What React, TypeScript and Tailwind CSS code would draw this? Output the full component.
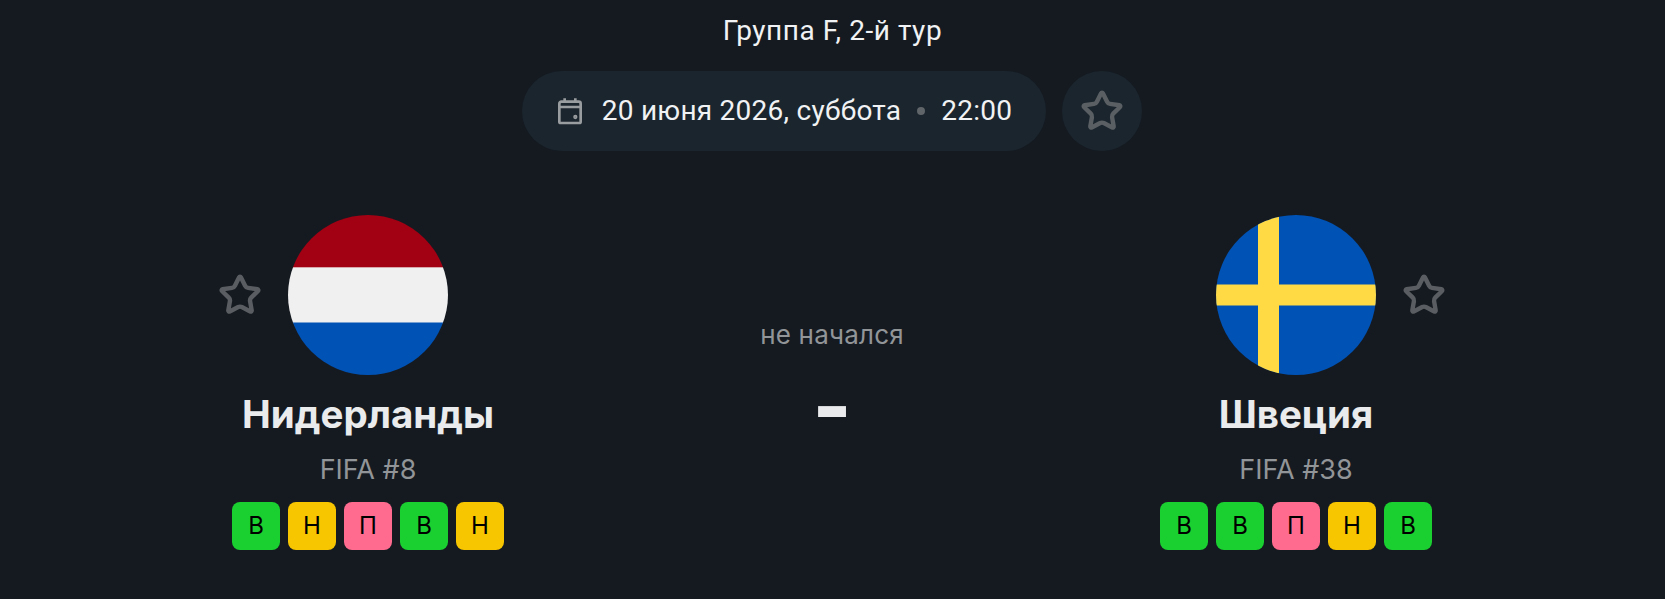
import { Star } from "lucide-react";

type Res = "В" | "Н" | "П";

const resColor: Record<Res, string> = {
  В: "bg-[#1ad030]",
  Н: "bg-[#f7c600]",
  П: "bg-[#ff6b8f]",
};

function Netherlands() {
  return (
    <svg width="160" height="160" viewBox="0 0 160 160" className="rounded-full">
      <rect width="160" height="53" fill="#a20013" />
      <rect y="52.3" width="160" height="56" fill="#f0f0f0" />
      <rect y="107.5" width="160" height="52.5" fill="#0052b4" />
    </svg>
  );
}

function Sweden() {
  return (
    <svg width="160" height="160" viewBox="0 0 160 160" className="rounded-full">
      <rect width="160" height="160" fill="#0052b4" />
      <rect x="42" width="21" height="160" fill="#ffda44" />
      <rect y="69.5" width="160" height="21" fill="#ffda44" />
    </svg>
  );
}

function Badges({ items }: { items: Res[] }) {
  return (
    <div className="mt-4 flex gap-2">
      {items.map((r, i) => (
        <div
          key={i}
          className={`flex h-12 w-12 items-center justify-center rounded-lg text-[24px] text-black ${resColor[r]}`}
        >
          {r}
        </div>
      ))}
    </div>
  );
}

function Team({
  name,
  rank,
  form,
  flag,
  side,
}: {
  name: string;
  rank: string;
  form: Res[];
  flag: React.ReactNode;
  side: "left" | "right";
}) {
  const star = <Star size={44} strokeWidth={2.4} className="text-[#5a5e62]" />;
  return (
    <div className="flex w-[400px] flex-col items-center">
      <div className="grid w-full grid-cols-[1fr_160px_1fr] items-center">
        <div className="flex justify-end pr-[26px]">{side === "left" && star}</div>
        {flag}
        <div className="flex justify-start pl-[26px]">{side === "right" && star}</div>
      </div>
      <div className="mt-[15px] text-[38.5px] leading-[48px] font-bold text-[#e9ebec]">{name}</div>
      <div className="mt-4 text-[27px] leading-8 text-[#929598]">{rank}</div>
      <Badges items={form} />
    </div>
  );
}

export default function App() {
  return (
    <div className="h-[599px] w-full bg-[#151a21] pt-3 font-['Inter',sans-serif] text-[#f1f2f3]">
      <div className="text-center font-['Roboto',sans-serif] text-[28px] leading-[38px] tracking-[0.55px]">
        Группа F, 2-й тур
      </div>

      <div className="mt-[21px] flex justify-center gap-4 pr-px">
        <div className="flex h-20 w-[524px] items-center justify-center gap-4 rounded-full bg-[#1b252d] font-['Roboto',sans-serif] text-[28px] tracking-[0.25px]">
          <svg width="32" height="32" viewBox="0 0 24 24" fill="none" stroke="#9a9da0" strokeWidth="2" className="-ml-0.5">
            <path d="M4 9V6.5A1.5 1.5 0 0 1 5.5 5h13A1.5 1.5 0 0 1 20 6.5V20a1 1 0 0 1-1 1H5a1 1 0 0 1-1-1V9h16" />
            <path d="M8 2.5V5M16 2.5V5" />
            <circle cx="16" cy="16.5" r="0.6" fill="#9a9da0" />
          </svg>
          <span>20 июня 2026, суббота</span>
          <span className="h-2 w-2 rounded-full bg-[#5f6569]" />
          <span>22:00</span>
        </div>
        <div className="flex h-20 w-20 items-center justify-center rounded-full bg-[#1b252d]">
          <Star size={44} strokeWidth={2.4} className="text-[#5a5f64]" />
        </div>
      </div>

      <div className="mt-16 flex justify-between pr-[169px] pl-[168px]">
        <Team name="Нидерланды" rank="FIFA #8" form={["В", "Н", "П", "В", "Н"]} flag={<Netherlands />} side="left" />

        <div className="flex flex-col items-center pt-[100px]">
          <div className="text-[26px] leading-10 tracking-[0.2px] text-[#929598]">не начался</div>
          <div className="mt-[15px] text-[83px] leading-[72px] font-extrabold text-[#e9ebec]">-</div>
        </div>

        <Team name="Швеция" rank="FIFA #38" form={["В", "В", "П", "Н", "В"]} flag={<Sweden />} side="right" />
      </div>
    </div>
  );
}
